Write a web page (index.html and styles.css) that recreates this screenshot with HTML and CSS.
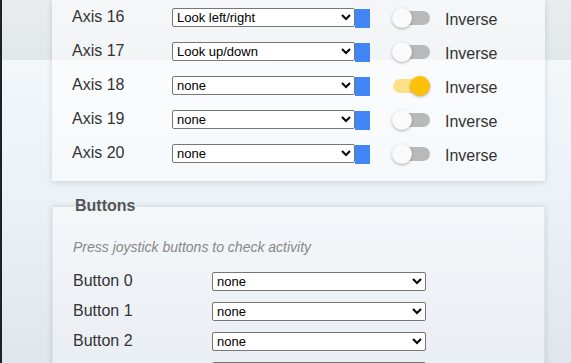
FILE: index.html
```html
<!DOCTYPE html>
<html lang="en">

<head>
    <meta charset="UTF-8">
    <meta name="viewport" content="width=device-width, initial-scale=1.0">
    <title>Joystick</title>
    <link rel="stylesheet" href="styles.css">
</head>

<body>
    <div class="page">
        <div class="panel axes">
            <div class="axis-row">
                <span class="axis-name">Axis 16</span>
                <select>
                    <option>Look left/right</option>
                </select>
                <span class="axis-value"></span>
                <label class="switch"><input type="checkbox"><span class="slider"></span></label>
                <span class="inverse">Inverse</span>
            </div>
            <div class="axis-row">
                <span class="axis-name">Axis 17</span>
                <select>
                    <option>Look up/down</option>
                </select>
                <span class="axis-value"></span>
                <label class="switch"><input type="checkbox"><span class="slider"></span></label>
                <span class="inverse">Inverse</span>
            </div>
            <div class="axis-row">
                <span class="axis-name">Axis 18</span>
                <select>
                    <option>none</option>
                </select>
                <span class="axis-value"></span>
                <label class="switch"><input type="checkbox" checked><span class="slider"></span></label>
                <span class="inverse">Inverse</span>
            </div>
            <div class="axis-row">
                <span class="axis-name">Axis 19</span>
                <select>
                    <option>none</option>
                </select>
                <span class="axis-value"></span>
                <label class="switch"><input type="checkbox"><span class="slider"></span></label>
                <span class="inverse">Inverse</span>
            </div>
            <div class="axis-row">
                <span class="axis-name">Axis 20</span>
                <select>
                    <option>none</option>
                </select>
                <span class="axis-value"></span>
                <label class="switch"><input type="checkbox"><span class="slider"></span></label>
                <span class="inverse">Inverse</span>
            </div>
        </div>

        <fieldset class="panel buttons">
            <legend>Buttons</legend>
            <p class="hint">Press joystick buttons to check activity</p>
            <div class="button-row">
                <span class="button-name">Button 0</span>
                <select>
                    <option>none</option>
                </select>
            </div>
            <div class="button-row">
                <span class="button-name">Button 1</span>
                <select>
                    <option>none</option>
                </select>
            </div>
            <div class="button-row">
                <span class="button-name">Button 2</span>
                <select>
                    <option>none</option>
                </select>
            </div>
            <div class="button-row">
                <span class="button-name">Button 3</span>
                <select>
                    <option>none</option>
                </select>
            </div>
        </fieldset>
    </div>
</body>

</html>
```

FILE: styles.css
```css
html,
body {
    height: 100%;
}

body {
    margin: 0;
    font-family: "Liberation Sans", Arial, sans-serif;
    color: #333;
    border-left: 2px solid #1c2326;
    overflow: hidden;
    background:
        linear-gradient(to bottom, #e8ecee 0, #e2e7ea 60px, transparent 60px),
        linear-gradient(to bottom, #f3f7fa 60px, #eaf1f7 200px, #dfe6ec 100%);
}

.page {
    width: 493px;
    margin-left: 50px;
}

.panel {
    background-color: rgba(255, 255, 255, 0.55);
    box-shadow: 0 1px 6px rgba(0, 0, 0, 0.14);
}

.axes {
    padding: 0 20px 11px;
}

.axis-row {
    display: flex;
    align-items: center;
    height: 34px;
}

.axis-name {
    width: 100px;
    font-size: 16px;
}

select {
    height: 19px;
    padding: 0;
    font-family: "Liberation Sans", Arial, sans-serif;
    font-size: 13px;
    color: #000;
    background-color: #fff;
    border: 1px solid #767676;
    border-radius: 2px;
}

.axis-row select {
    width: 183px;
}

.axis-value {
    width: 15px;
    height: 19px;
    margin-top: 2px;
    background-color: #4285f4;
}

.switch {
    position: relative;
    width: 38px;
    height: 20px;
    margin: 2px 15px 0 22px;
    cursor: pointer;
}

.switch input {
    display: none;
}

.slider {
    position: absolute;
    left: 1px;
    right: 0;
    top: 3px;
    height: 14px;
    border-radius: 7px;
    background-color: #b9b9b9;
}

.slider::before {
    content: "";
    position: absolute;
    left: -1px;
    top: -3px;
    width: 20px;
    height: 20px;
    border-radius: 50%;
    background-color: #fafafa;
    box-shadow: 0 1px 3px rgba(0, 0, 0, 0.3);
}

.switch input:checked + .slider {
    background-color: #ffe08a;
}

.switch input:checked + .slider::before {
    left: 17px;
    background-color: #ffc107;
}

.inverse {
    margin-top: 5px;
    font-size: 16px;
}

.buttons {
    margin: 16px 0 0;
    padding: 0 20px 10px;
    border: 1px solid rgba(0, 0, 0, 0.06);
    border-bottom: none;
    background: linear-gradient(to bottom, rgba(248, 250, 252, 0.7), rgba(236, 240, 244, 0.7));
}

.buttons legend {
    padding: 0 2px;
    font-size: 16px;
    font-weight: bold;
    color: #555;
}

.hint {
    margin: 24px 0 11px;
    font-size: 14px;
    font-style: italic;
    color: #888;
}

.button-row {
    display: flex;
    align-items: center;
    height: 30px;
}

.button-name {
    width: 139px;
    font-size: 16px;
}

.button-row select {
    width: 214px;
}
```
